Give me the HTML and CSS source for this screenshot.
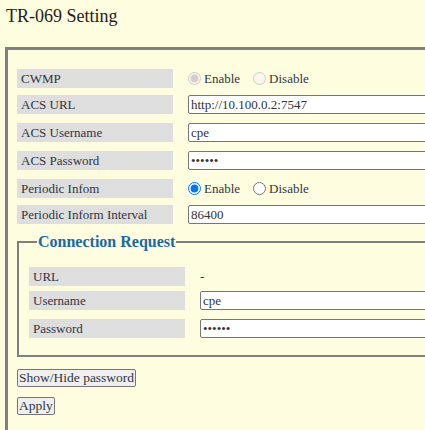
FILE: index.html
```html
<!DOCTYPE html>
<html>
<head>
<meta charset="utf-8">
<title>TR-069 Setting</title>
<link rel="stylesheet" href="styles.css">
</head>
<body>
<div class="page">
  <div class="title">TR-069 Setting</div>
  <fieldset class="box">
    <div class="rows">
      <div class="row">
        <div class="lbl">CWMP</div>
        <div class="val">
          <label class="opt"><input type="radio" name="cwmp" checked disabled>Enable</label>
          <label class="opt"><input type="radio" name="cwmp" disabled>Disable</label>
        </div>
      </div>
      <div class="row field">
        <div class="lbl">ACS URL</div>
        <div class="val"><input class="txt" type="text" value="http://10.100.0.2:7547"></div>
      </div>
      <div class="row field">
        <div class="lbl">ACS Username</div>
        <div class="val"><input class="txt" type="text" value="cpe"></div>
      </div>
      <div class="row field">
        <div class="lbl">ACS Password</div>
        <div class="val"><input class="txt" type="password" value="secret"></div>
      </div>
      <div class="row">
        <div class="lbl">Periodic Infom</div>
        <div class="val">
          <label class="opt"><input type="radio" name="inform" checked>Enable</label>
          <label class="opt"><input type="radio" name="inform">Disable</label>
        </div>
      </div>
      <div class="row field">
        <div class="lbl">Periodic Inform Interval</div>
        <div class="val"><input class="txt" type="text" value="86400"></div>
      </div>
    </div>

    <fieldset class="sub">
      <legend>Connection Request</legend>
      <div class="rows">
        <div class="row plain">
          <div class="lbl">URL</div>
          <div class="val">-</div>
        </div>
        <div class="row field">
          <div class="lbl">Username</div>
          <div class="val"><input class="txt" type="text" value="cpe"></div>
        </div>
        <div class="row field">
          <div class="lbl">Password</div>
          <div class="val"><input class="txt" type="password" value="secret"></div>
        </div>
      </div>
    </fieldset>

    <div class="actions">
      <button class="btn" type="button">Show/Hide password</button>
      <button class="btn" type="button">Apply</button>
    </div>
  </fieldset>
</div>
</body>
</html>
```

FILE: styles.css
```css
html, body {
  margin: 0;
  padding: 0;
  overflow: hidden;
  background: #fffde0;
}

body {
  font-family: "Liberation Serif", "Times New Roman", serif;
  font-size: 13px;
  color: #2f3542;
}

.page {
  width: 700px;
  padding: 6px 0 0 5px;
}

.title {
  font-size: 18px;
  line-height: 21px;
  color: #222;
  padding-left: 1px;
  margin-bottom: 20px;
}

.box {
  margin: 0;
  border: 3px solid #808080;
  padding: 19px 0 40px 9px;
  min-width: 0;
}

.rows {
  display: flex;
  flex-direction: column;
  gap: 7px;
}

.row {
  display: flex;
  align-items: flex-start;
  column-gap: 15px;
}

.row.field {
  padding-bottom: 2px;
}

.lbl {
  width: 156px;
  height: 19px;
  line-height: 19px;
  background: #dedede;
  padding-left: 4px;
  box-sizing: border-box;
  flex: none;
}

.val {
  display: flex;
  align-items: center;
  height: 19px;
  line-height: 19px;
}

.opt {
  display: inline-flex;
  align-items: center;
  margin-right: 13px;
}

.opt input {
  margin: 0 3px 0 0;
  width: 13px;
  height: 13px;
}

.txt {
  font-family: "Liberation Serif", "Times New Roman", serif;
  font-size: 13px;
  color: #333;
  width: 300px;
  height: 19px;
  box-sizing: border-box;
  padding: 0 2px;
  margin: 0;
  border: 1px solid #767676;
  border-radius: 2px;
  background: #fff;
}

.sub {
  margin: 7px 0 0 0;
  border: 2px solid #808080;
  padding: 16px 0 15px 10px;
  min-width: 0;
}

.sub legend {
  font-size: 16px;
  font-weight: bold;
  color: #1a6aa6;
  padding: 0 1px;
  margin-left: 8px;
  line-height: 18px;
}

.sub .row.plain {
  margin-bottom: -2px;
}

.actions {
  display: flex;
  flex-direction: column;
  align-items: flex-start;
  gap: 10px;
  margin-top: 12px;
}

.btn {
  font-family: "Liberation Serif", "Times New Roman", serif;
  font-size: 13.5px;
  color: #2f3542;
  background: #efefef;
  border: 1px solid #767676;
  border-radius: 2px;
  padding: 0 1px;
  height: 18px;
  line-height: 16px;
  margin: 0;
}
```
